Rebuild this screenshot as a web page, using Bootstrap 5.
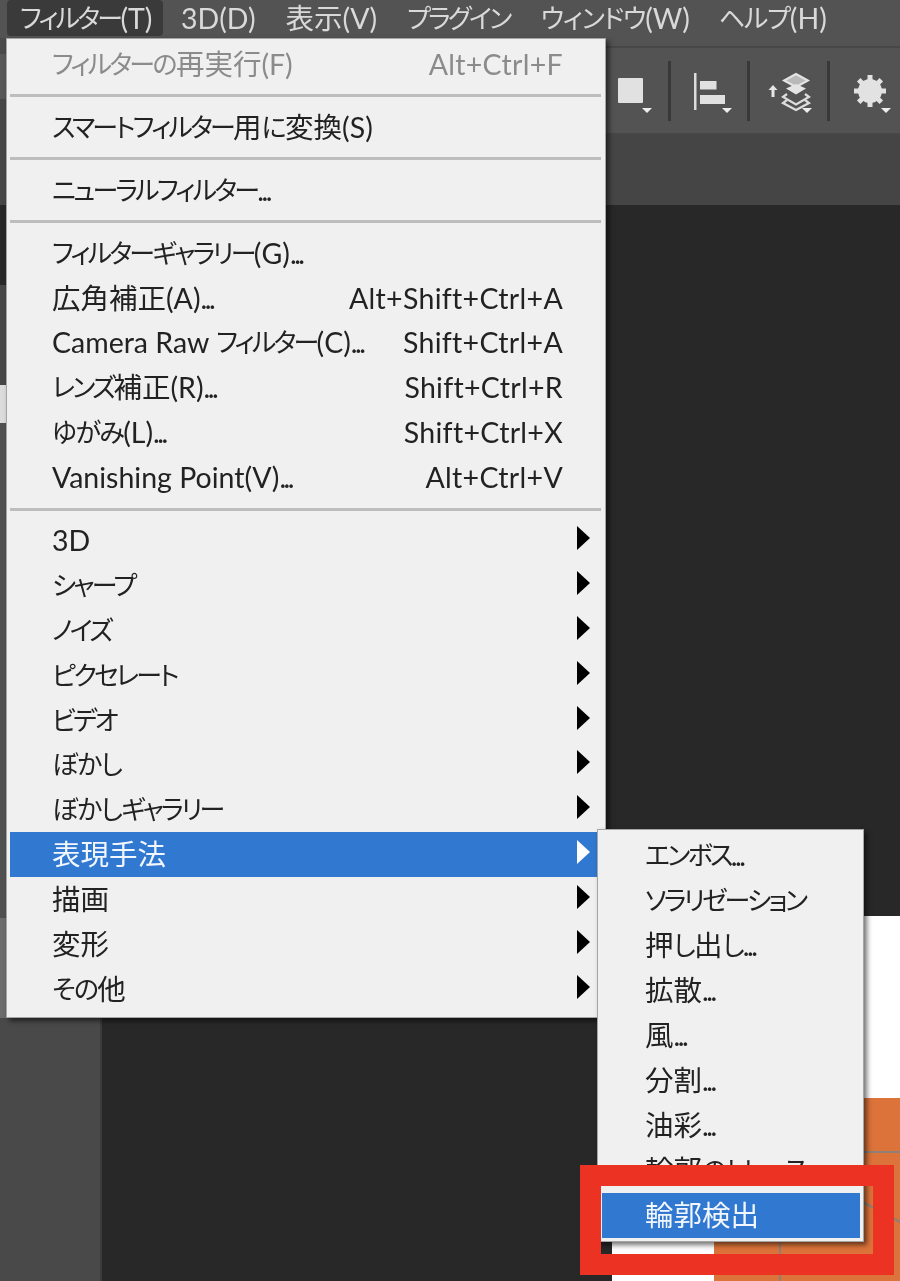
<!DOCTYPE html>
<html lang="ja">
<head>
<meta charset="utf-8">
<title>Filter menu</title>
<link href="https://cdn.jsdelivr.net/npm/bootstrap@5.3.0/dist/css/bootstrap.min.css" rel="stylesheet">
<style>
html,body{margin:0;height:1281px;overflow:hidden;background:#282828}
.ps-app{position:relative;width:900px;height:1281px;overflow:hidden;font-family:Lato,"Noto Sans CJK JP",sans-serif;font-feature-settings:"palt";filter:blur(.35px)}
.k{font-size:26px;letter-spacing:-2.7px;vertical-align:1px}
.h{font-size:26px;letter-spacing:-1.6px;vertical-align:1px}
.dt{letter-spacing:-2.5px}
.sc{letter-spacing:.3px;margin-right:-1px}
.ps-menubar{height:46px;background:#535353;padding-left:7px;font-size:28.5px;line-height:36px;color:#d9d9d9}
.ps-top{height:36px;padding:0 15px;white-space:nowrap;border-radius:4px}
.ps-top-on{background:#3a3a3a;padding:0 0 0 13px;margin-right:3px;width:156px}
.ps-top3{padding-right:16px}
.ps-top4{padding-right:14px}
.ps-top4 .k,.ps-top5 .k{letter-spacing:-1.2px}
.ps-toolbar{height:89px;background:#535353;border-top:2px solid #474747;border-bottom:2px solid #474747}
.ps-sep{width:3px;height:60px;background:#383838}
.ps-tabs{height:70px;background:#454545}
.ps-work{height:1076px}
.ps-left{width:102px;background:#494949;border-right:2px solid #3b3b3b;flex:none}
.ps-canvas{padding:711px 0 0 510px;background:#282828}
.ps-strip{position:absolute;left:0;top:38px;width:6px;height:980px;background:#4f4f4f}
.ps-strip i{display:block}
.ps-s1{height:16px;background:#4a4a4a}.ps-s2{height:45px;background:#575757}.ps-s3{height:106px;background:#474747}.ps-s4{height:80px;background:#282828}.ps-s5{height:100px;background:#474747}.ps-s6{height:38px;background:#dcdcdc}.ps-s7{height:495px;background:#505050}.ps-s8{height:100px;background:#6c6c6c}
.dropdown-menu.ps-menu{position:absolute;display:block;margin:0;min-width:0;background:#f0f0f0;border:1px solid #a5a5a5;border-radius:0;box-shadow:3px 3px 5px rgba(0,0,0,.55);font-size:28.5px;list-style:none}
.ps-main{left:6px;top:38px;width:600px;height:980px;padding:3px 4px 0 3px}
.ps-sub{left:597px;top:829px;width:267px;height:413px;padding:3px 3px 0 4px}
.ps-main .dropdown-item{height:44.9px;line-height:44px;padding:0 39px 0 42px;color:#222;position:relative;white-space:nowrap}
.ps-sub .dropdown-item{height:45px;line-height:44px;padding:0 0 0 43px;color:#222;white-space:nowrap}
.dropdown-item.active{background:#3178d1;color:#f2f7fd}
.dropdown-item.disabled{color:#8b8b8b;background:none}
.dropdown-divider.ps-div{margin:7.5px 0;height:3px;border:0;background:#bdbdbd;opacity:1}
.ps-arrow{position:absolute;right:11px;top:8px;width:0;height:0;border-left:13px solid #000;border-top:12px solid transparent;border-bottom:12px solid transparent}
.active .ps-arrow{border-left-color:#fff}
.ps-red{position:absolute;z-index:1001;left:580px;top:1165px;width:314px;height:110px;border:21px solid #ec3323}
</style>
</head>
<body>
<div class="ps-app">
  <nav class="ps-menubar d-flex">
    <span class="ps-top ps-top-on"><span class="k">フィルター</span>(T)</span>
    <span class="ps-top">3D(D)</span>
    <span class="ps-top">表示(V)</span>
    <span class="ps-top ps-top3"><span class="k">プラグイン</span></span>
    <span class="ps-top ps-top4"><span class="k">ウィンドウ</span>(W)</span>
    <span class="ps-top ps-top5"><span class="k">ヘルプ</span>(H)</span>
  </nav>
  <div class="ps-toolbar d-flex align-items-center justify-content-end">
    <svg width="78" height="85" viewBox="590 48 78 85" aria-hidden="true"><rect x="618" y="78" width="25" height="25" rx="1" fill="#e1e1e1"/><path d="M642 108h10l-5 5z" fill="#eee"/></svg>
    <div class="ps-sep"></div>
    <svg width="76" height="85" viewBox="671 48 76 85" aria-hidden="true"><rect x="694" y="73" width="2.5" height="37" fill="#dcdcdc"/><rect x="700" y="81" width="16.5" height="8.5" fill="#e1e1e1"/><rect x="700" y="95" width="25" height="9" fill="#e1e1e1"/><path d="M722 108h10l-5 5z" fill="#eee"/></svg>
    <div class="ps-sep"></div>
    <svg width="77" height="85" viewBox="750 48 77 85" aria-hidden="true"><path d="M773 85l4.500 5h-3v7h-3v-7h-3z" fill="#e6e6e6"/><path d="M787 94l-4 3 13 7.500 13-7.500-4-3" fill="none" stroke="#ddd" stroke-width="2.200"/><path d="M787 100l-4 3 13 7 13-7-4-3" fill="none" stroke="#ddd" stroke-width="2.200"/><path d="M796 74l12 6.500-12 6.500-12-6.500z" fill="#b9b9b9" stroke="#e4e4e4" stroke-width="2"/><path d="M796 84l10 4.500-10 6-10-6z" fill="#e4e4e4"/><path d="M802 108h10l-5 5z" fill="#eee"/></svg>
    <div class="ps-sep"></div>
    <svg width="70" height="85" viewBox="830 48 70 85" aria-hidden="true"><g fill="#e2e2e2"><rect x="867.500" y="75" width="5" height="32"/><rect x="867.500" y="75" width="5" height="32" transform="rotate(45 870 91)"/><rect x="867.500" y="75" width="5" height="32" transform="rotate(90 870 91)"/><rect x="867.500" y="75" width="5" height="32" transform="rotate(135 870 91)"/></g><circle cx="870" cy="91" r="8.500" fill="none" stroke="#e2e2e2" stroke-width="7"/><path d="M881 108h10l-5 5z" fill="#eee"/></svg>
  </div>
  <div class="ps-tabs"></div>
  <div class="ps-work d-flex">
    <div class="ps-left"></div>
    <div class="ps-canvas flex-grow-1">
      <svg width="288" height="365" viewBox="612 916 288 365" class="d-block" aria-hidden="true">
        <rect x="612" y="916" width="288" height="365" fill="#fff"/>
        <rect x="714" y="1098" width="186" height="183" fill="#dc733b"/>
        <path d="M714 1152H900M780 1152V1281M840 1190L900 1222" stroke="#8b8178" stroke-width="2" fill="none"/>
      </svg>
    </div>
  </div>
  <div class="ps-strip"><i class="ps-s1"></i><i class="ps-s2"></i><i class="ps-s3"></i><i class="ps-s4"></i><i class="ps-s5"></i><i class="ps-s6"></i><i class="ps-s7"></i><i class="ps-s8"></i></div>

  <ul class="dropdown-menu ps-menu ps-main">
    <li><span class="dropdown-item disabled d-flex justify-content-between"><span><span class="k">フィルター</span><span class="h">の</span>再実行(F)</span><span class="sc">Alt+Ctrl+F</span></span></li>
    <li><hr class="dropdown-divider ps-div"></li>
    <li><span class="dropdown-item"><span class="k">スマートフィルター</span>用<span class="h">に</span>変換(S)</span></li>
    <li><hr class="dropdown-divider ps-div"></li>
    <li><span class="dropdown-item"><span class="k">ニューラルフィルター</span><span class="dt">...</span></span></li>
    <li><hr class="dropdown-divider ps-div"></li>
    <li><span class="dropdown-item"><span class="k">フィルターギャラリー</span>(G)<span class="dt">...</span></span></li>
    <li><span class="dropdown-item d-flex justify-content-between"><span>広角補正(A)<span class="dt">...</span></span><span class="sc">Alt+Shift+Ctrl+A</span></span></li>
    <li><span class="dropdown-item d-flex justify-content-between"><span>Camera Raw <span class="k">フィルター</span>(C)<span class="dt">...</span></span><span class="sc">Shift+Ctrl+A</span></span></li>
    <li><span class="dropdown-item d-flex justify-content-between"><span><span class="k">レンズ</span>補正(R)<span class="dt">...</span></span><span class="sc">Shift+Ctrl+R</span></span></li>
    <li><span class="dropdown-item d-flex justify-content-between"><span><span class="h">ゆがみ</span>(L)<span class="dt">...</span></span><span class="sc">Shift+Ctrl+X</span></span></li>
    <li><span class="dropdown-item d-flex justify-content-between"><span>Vanishing Point(V)<span class="dt">...</span></span><span class="sc">Alt+Ctrl+V</span></span></li>
    <li><hr class="dropdown-divider ps-div"></li>
    <li><span class="dropdown-item">3D<i class="ps-arrow"></i></span></li>
    <li><span class="dropdown-item"><span class="k">シャープ</span><i class="ps-arrow"></i></span></li>
    <li><span class="dropdown-item"><span class="k">ノイズ</span><i class="ps-arrow"></i></span></li>
    <li><span class="dropdown-item"><span class="k">ピクセレート</span><i class="ps-arrow"></i></span></li>
    <li><span class="dropdown-item"><span class="k">ビデオ</span><i class="ps-arrow"></i></span></li>
    <li><span class="dropdown-item"><span class="h">ぼかし</span><i class="ps-arrow"></i></span></li>
    <li><span class="dropdown-item"><span class="h">ぼかし</span><span class="k">ギャラリー</span><i class="ps-arrow"></i></span></li>
    <li><span class="dropdown-item active">表現手法<i class="ps-arrow"></i></span></li>
    <li><span class="dropdown-item">描画<i class="ps-arrow"></i></span></li>
    <li><span class="dropdown-item">変形<i class="ps-arrow"></i></span></li>
    <li><span class="dropdown-item"><span class="h">その</span>他<i class="ps-arrow"></i></span></li>
  </ul>

  <ul class="dropdown-menu ps-menu ps-sub">
    <li><span class="dropdown-item"><span class="k">エンボス</span><span class="dt">...</span></span></li>
    <li><span class="dropdown-item"><span class="k">ソラリゼーション</span></span></li>
    <li><span class="dropdown-item">押<span class="h">し</span>出<span class="h">し</span><span class="dt">...</span></span></li>
    <li><span class="dropdown-item">拡散<span class="dt">...</span></span></li>
    <li><span class="dropdown-item">風<span class="dt">...</span></span></li>
    <li><span class="dropdown-item">分割<span class="dt">...</span></span></li>
    <li><span class="dropdown-item">油彩<span class="dt">...</span></span></li>
    <li><span class="dropdown-item">輪郭<span class="h">の</span><span class="k">トレース</span></span></li>
    <li><span class="dropdown-item active">輪郭検出</span></li>
  </ul>
  <div class="ps-red"></div>
</div>
<script src="https://cdn.jsdelivr.net/npm/bootstrap@5.3.0/dist/js/bootstrap.bundle.min.js"></script>
</body>
</html>
